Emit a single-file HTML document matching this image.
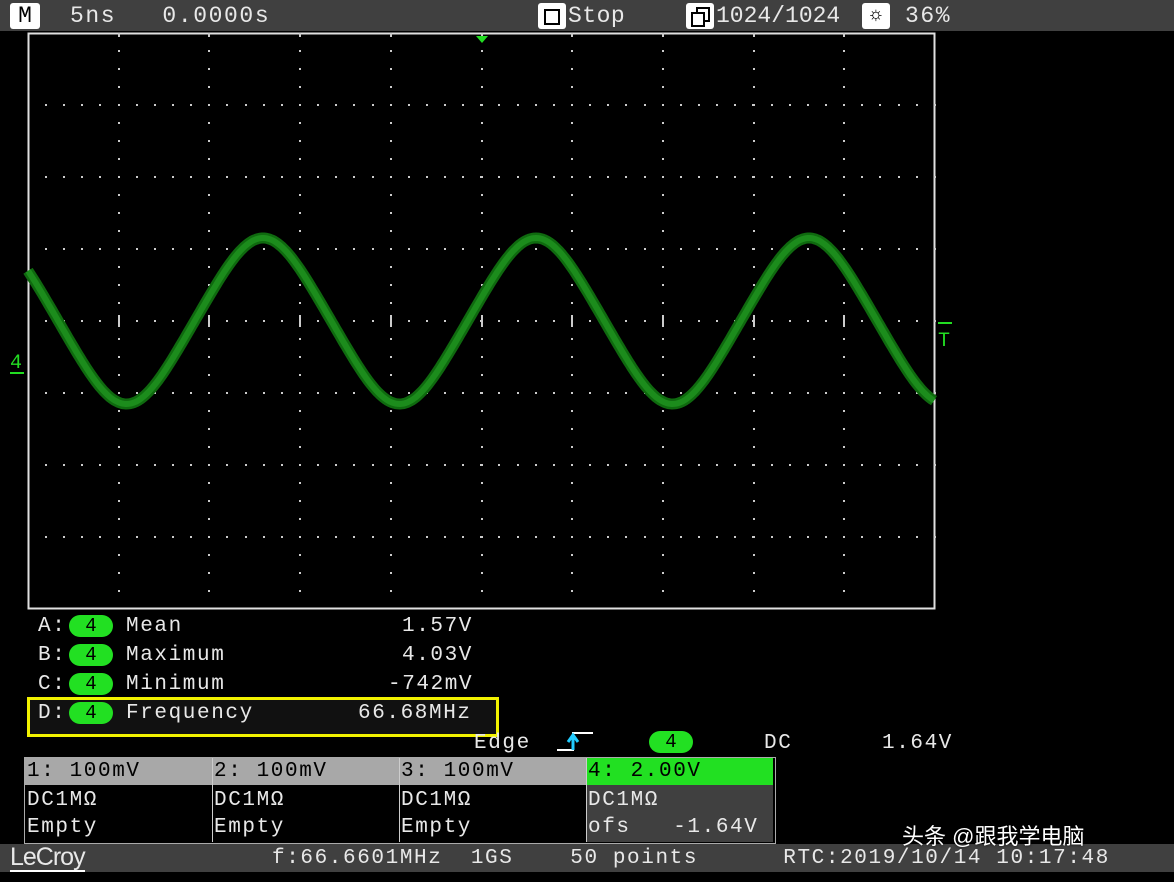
<!DOCTYPE html><html><head><meta charset="utf-8"><style>
body{margin:0;width:1174px;height:882px;background:#000;overflow:hidden;position:relative;font-family:"Liberation Mono",monospace;color:#e8e8e8}
.t{position:absolute;font-size:21px;letter-spacing:1.6px;line-height:1;white-space:pre}
.pill{position:absolute;background:#22e022;border-radius:11px;color:#000;width:44px;height:22px;text-align:center;font-size:19px;line-height:23px}
</style></head><body>
<div style="position:absolute;left:0;top:0;width:1174px;height:31px;background:#404040"></div>
<div style="position:absolute;left:10px;top:3px;width:30px;height:26px;background:#fff;border-radius:3px;color:#000;font-size:23px;text-align:center;line-height:27px">M</div>
<div class="t" style="left:70px;top:5px;font-size:23px">5ns   0.0000s</div>
<div style="position:absolute;left:538px;top:3px;width:28px;height:26px;background:#fff;border-radius:3px"><div style="position:absolute;left:6px;top:6px;width:12px;height:12px;border:2px solid #000"></div></div>
<div class="t" style="left:568px;top:5px;font-size:23px;letter-spacing:0.5px">Stop</div>
<div style="position:absolute;left:686px;top:3px;width:28px;height:26px;background:#fff;border-radius:3px"><div style="position:absolute;left:10px;top:4px;width:10px;height:11px;border:2px solid #000"></div><div style="position:absolute;left:5px;top:9px;width:10px;height:11px;border:2px solid #000;background:#fff"></div></div>
<div class="t" style="left:716px;top:5px;font-size:23px;letter-spacing:0">1024/1024</div>
<div style="position:absolute;left:862px;top:3px;width:28px;height:26px;background:#fff;border-radius:3px;color:#000;text-align:center;font-size:20px;line-height:26px">☼</div>
<div class="t" style="left:905px;top:5px;font-size:23px">36%</div>
<svg style="position:absolute;left:0;top:0" width="1174" height="882">
<rect x="28.5" y="33.5" width="906" height="575" fill="none" stroke="#e0e0e0" stroke-width="2"/>
<g id="grid" fill="#ccc"></g>
<polygon points="476,36 488,36 482,43" fill="#2d2"/>
<polyline id="w1" fill="none" stroke="#0f6a0f" stroke-width="11" stroke-linejoin="round"/>
<polyline id="w2" fill="none" stroke="#1c8c1c" stroke-width="6" stroke-linejoin="round"/>
<text x="10" y="368" fill="#2d2" font-family="Liberation Mono" font-size="20">4</text>
<rect x="10" y="372" width="14" height="2" fill="#2d2"/>
<text x="938" y="346" fill="#2d2" font-family="Liberation Mono" font-size="20">T</text>
<rect x="938" y="322" width="14" height="2" fill="#2d2"/>
</svg>
<script>
var g=document.getElementById('grid'),s='';
for(var i=1;i<10;i++){var x=Math.round(28+i*90.7);for(var y=51;y<608;y+=18)s+='<rect x="'+(x-1)+'" y="'+(y-1)+'" width="2" height="2"/>';s+='<rect x="'+(x-1)+'" y="315" width="2" height="12"/>';}
for(var j=1;j<8;j++){var y=33+j*72;for(var x=28+18;x<935;x+=18.14)s+='<rect x="'+(Math.round(x)-1)+'" y="'+(y-1)+'" width="2" height="2"/>';}
for(var i=1;i<10;i++){var x=Math.round(28+i*90.7);s+='<rect x="'+(x-1)+'" y="33" width="2" height="4"/>';}
g.innerHTML=s;
var p='';for(var x=28;x<=935;x+=2){var th=2*Math.PI*(x-263)/273;var v=(Math.cos(th)+Math.cos(3*th)/40)/1.025;p+=x+','+(321-83*v).toFixed(1)+' ';}
document.getElementById('w1').setAttribute('points',p);document.getElementById('w2').setAttribute('points',p);
</script>
<div class="t" style="left:38px;top:616px">A:</div><div class="pill" style="left:69px;top:615px">4</div><div class="t" style="left:126px;top:616px">Mean</div><div class="t" style="left:402px;top:616px">1.57V</div>
<div class="t" style="left:38px;top:645px">B:</div><div class="pill" style="left:69px;top:644px">4</div><div class="t" style="left:126px;top:645px">Maximum</div><div class="t" style="left:402px;top:645px">4.03V</div>
<div class="t" style="left:38px;top:674px">C:</div><div class="pill" style="left:69px;top:673px">4</div><div class="t" style="left:126px;top:674px">Minimum</div><div class="t" style="left:388px;top:674px">-742mV</div>
<div style="position:absolute;left:27px;top:697px;width:466px;height:34px;border:3px solid #f2f200;background:#111"></div>
<div class="t" style="left:38px;top:703px">D:</div><div class="pill" style="left:69px;top:702px">4</div><div class="t" style="left:126px;top:703px">Frequency</div><div class="t" style="left:358px;top:703px">66.68MHz</div>
<div class="t" style="left:474px;top:733px">Edge</div>
<svg style="position:absolute;left:555px;top:730px" width="40" height="24"><path d="M2 20H18V3H38" stroke="#fff" stroke-width="2" fill="none"/><path d="M18 20V6M13 12L18 5L23 12" stroke="#2cf" stroke-width="3" fill="none"/></svg>
<div class="pill" style="left:649px;top:731px;width:44px">4</div>
<div class="t" style="left:764px;top:733px">DC</div><div class="t" style="left:882px;top:733px">1.64V</div>
<div style="position:absolute;left:24px;top:757px;width:750px;height:85px;border:1px solid #aaa;background:#000"></div>
<div style="position:absolute;left:25px;top:758px;width:561px;height:27px;background:#a8a8a8"></div>
<div style="position:absolute;left:586px;top:758px;width:187px;height:27px;background:#22e022"></div>
<div style="position:absolute;left:586px;top:785px;width:187px;height:57px;background:#404040"></div>
<div style="position:absolute;left:212px;top:758px;width:1px;height:84px;background:#ccc"></div>
<div style="position:absolute;left:399px;top:758px;width:1px;height:84px;background:#ccc"></div>
<div style="position:absolute;left:586px;top:758px;width:1px;height:84px;background:#ccc"></div>
<div class="t" style="left:27px;top:761px;color:#000">1: 100mV</div><div class="t" style="left:214px;top:761px;color:#000">2: 100mV</div><div class="t" style="left:401px;top:761px;color:#000">3: 100mV</div><div class="t" style="left:588px;top:761px;color:#000">4: 2.00V</div>
<div class="t" style="left:27px;top:790px">DC1MΩ</div><div class="t" style="left:214px;top:790px">DC1MΩ</div><div class="t" style="left:401px;top:790px">DC1MΩ</div><div class="t" style="left:588px;top:790px">DC1MΩ</div>
<div class="t" style="left:27px;top:817px">Empty</div><div class="t" style="left:214px;top:817px">Empty</div><div class="t" style="left:401px;top:817px">Empty</div><div class="t" style="left:588px;top:817px">ofs   -1.64V</div>
<div style="position:absolute;left:0;top:844px;width:1174px;height:28px;background:#404040"></div>
<div class="t" style="left:10px;top:845px;font-family:'Liberation Sans',sans-serif;font-size:25px;letter-spacing:-1px;border-bottom:2px solid #fff">LeCroy</div>
<div class="t" style="left:272px;top:848px">f:66.6601MHz  1GS    50 points      RTC:2019/10/14 10:17:48</div>
<div class="t" style="left:902px;top:826px;font-family:'Liberation Sans','Noto Sans CJK SC',sans-serif;font-size:22px;letter-spacing:0;color:#fff;text-shadow:0 0 3px #000">头条 @跟我学电脑</div>
</body></html>
